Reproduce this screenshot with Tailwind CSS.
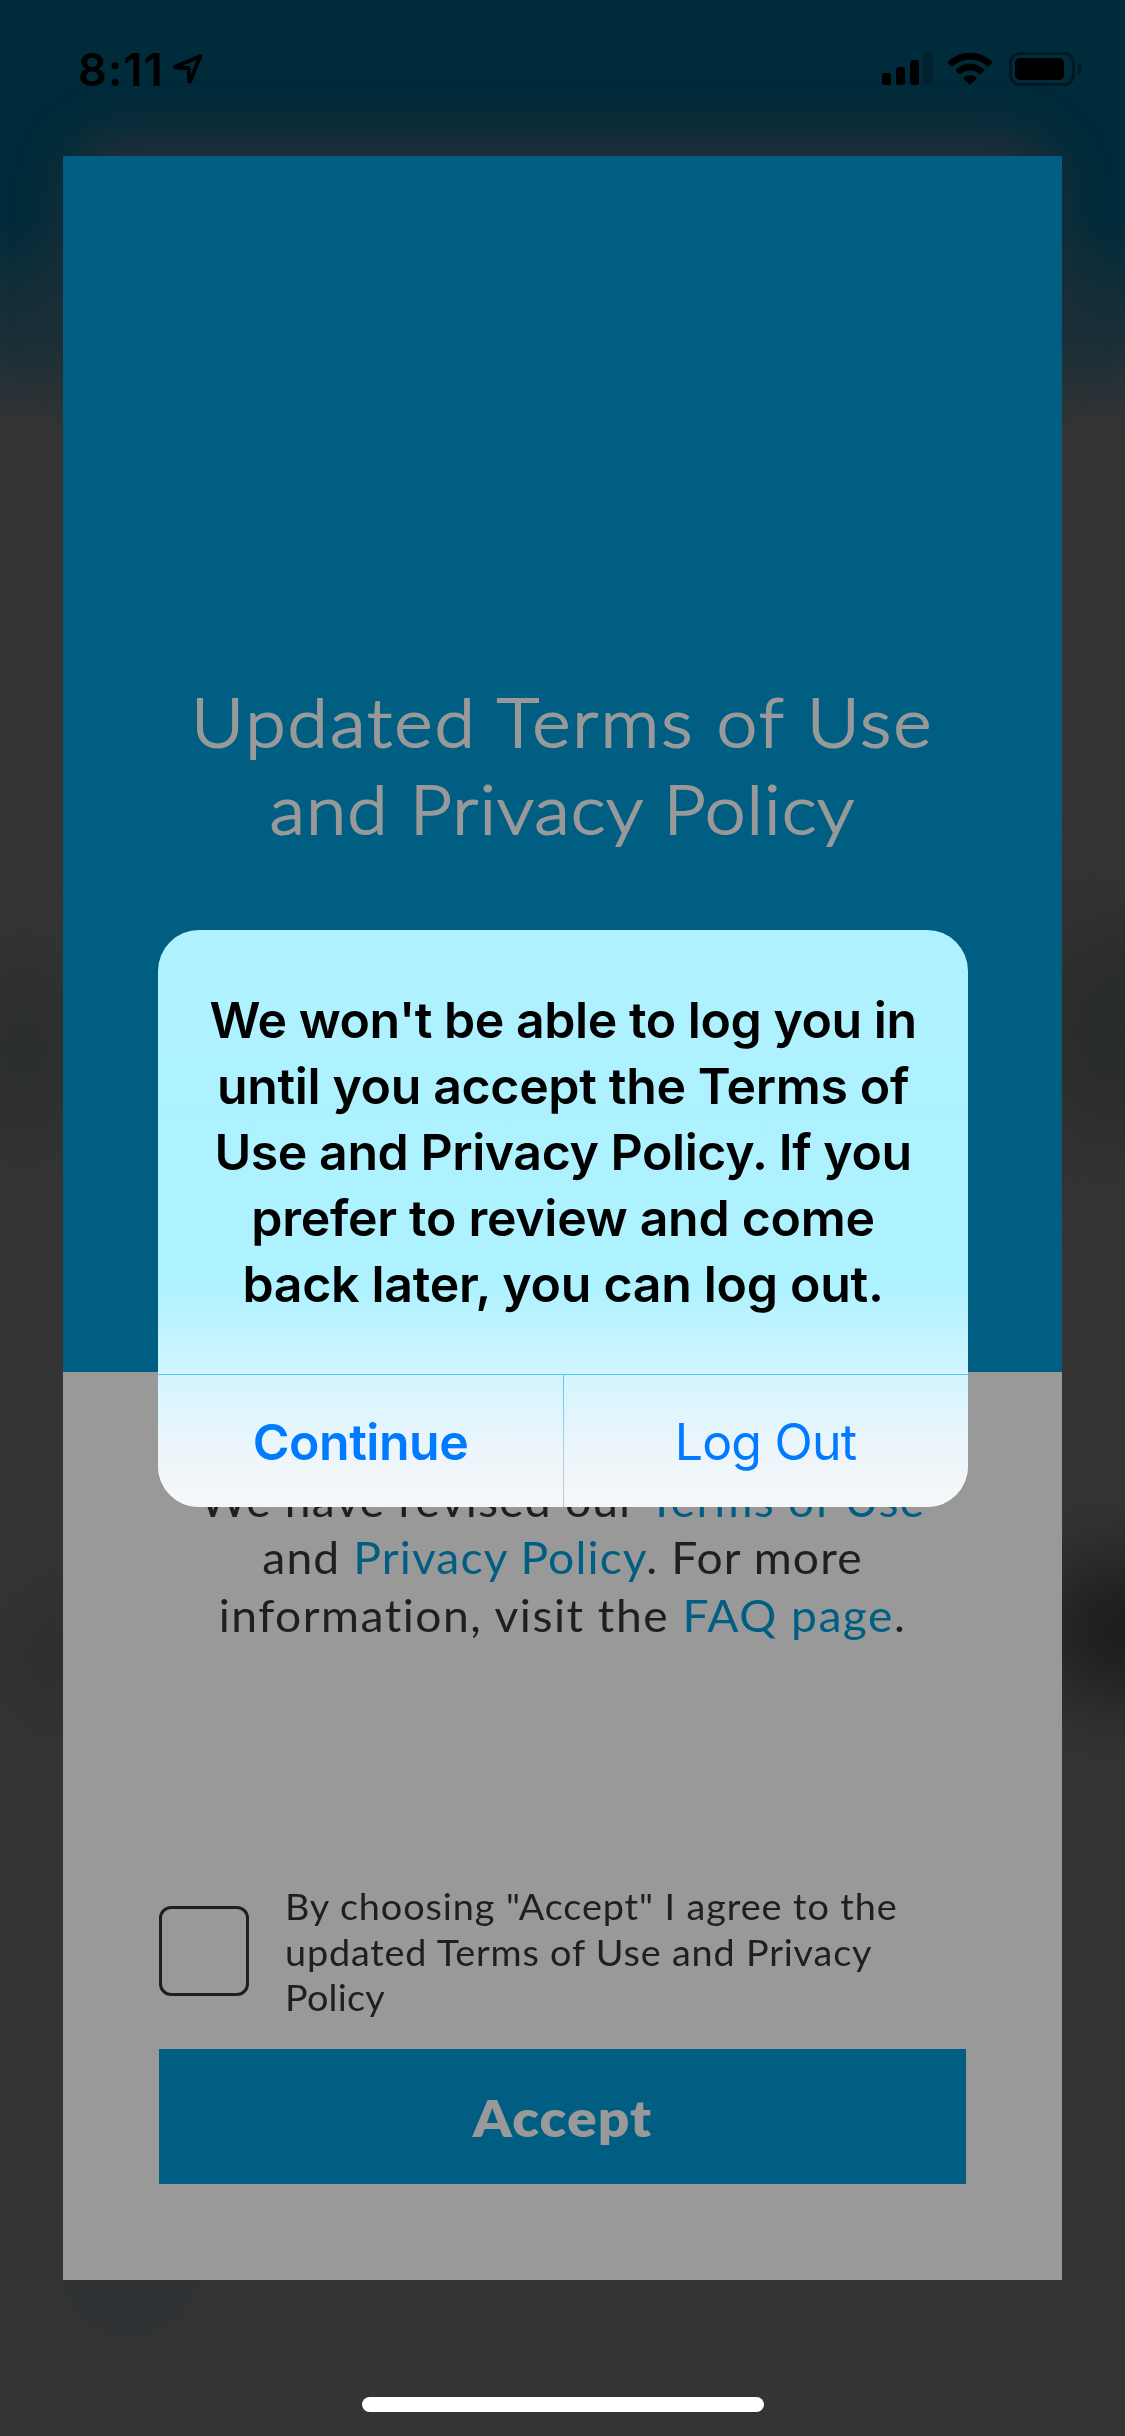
<!DOCTYPE html>
<html lang="en">
<head>
<meta charset="utf-8">
<title>Updated Terms of Use and Privacy Policy</title>
<script src="https://cdn.jsdelivr.net/npm/@tailwindcss/browser@4"></script>
</head>
<body class="relative flex h-[2436px] w-[1125px] flex-col overflow-hidden bg-[#343434] font-[Lato,sans-serif]">
  <!-- Blurred app backdrop -->
  <div class="absolute inset-0 overflow-hidden" aria-hidden="true">
    <div class="absolute inset-x-0 top-0 h-[430px] bg-linear-to-b from-[#002b3a] from-50% via-[#1b2f37] via-80% to-[#343434] to-100%"></div>
    <div class="absolute left-[65px] top-[135px] h-[250px] w-[995px] rounded-[60px] bg-[#232e36] blur-[24px]"></div>
    <div class="absolute -left-[40px] top-[960px] h-[180px] w-[130px] rounded-full bg-[#2a2e2c] blur-[45px]"></div>
    <div class="absolute left-[1040px] top-[920px] h-[220px] w-[160px] rounded-full bg-[#272b27] blur-[50px]"></div>
    <div class="absolute left-[1040px] top-[1560px] h-[140px] w-[180px] rounded-full bg-[#1d1d1e] blur-[38px]"></div>
    <div class="absolute left-[20px] top-[1590px] h-[130px] w-[80px] rounded-full bg-[#302e2c] blur-[35px]"></div>
    <div class="absolute left-[50px] top-[2220px] h-[120px] w-[160px] rounded-full bg-[#2e3235] blur-[35px]"></div>
  </div>

  <!-- Status bar -->
  <header class="relative flex h-[156px] shrink-0 items-start justify-between pl-[78px] pr-[42px] pt-[52px] text-black">
    <div class="flex items-start">
      <span class="-mt-[10px] block w-[95px] whitespace-nowrap font-[Inter,sans-serif] text-[45px] font-semibold leading-[55px] tracking-[1.2px]">8:11</span>
      <svg class="mt-px" width="32" height="32" viewBox="0 0 32 32" fill="none" stroke="#000" stroke-width="3.8" stroke-linejoin="round"><path d="M27.3 3.2 L1.9 13.7 Q1.4 14.2 2.2 14.7 L15.7 15 L16 28 Q16.4 29.2 17.3 28Z"/></svg>
    </div>
    <div class="flex items-start">
      <svg width="42" height="34" viewBox="0 0 42 34"><rect x="0" y="21" width="9" height="12" rx="2.5"/><rect x="14" y="15" width="9" height="18" rx="2.5"/><rect x="28" y="8" width="9" height="25" rx="2.5"/></svg>
      <svg class="-ml-px" width="10" height="34" viewBox="0 0 10 34"><rect x="0.5" y="1" width="9" height="32" rx="2.5" fill="#00212d"/></svg>
      <svg class="ml-[14px] mr-px" width="46" height="34" viewBox="0 0 46 34"><path d="M1 9.6 A31.5 31.5 0 0 1 45 9.6 Q45.6 10.4 45 11.1 L41.8 14.3 Q41 15 40.2 14.3 A25 25 0 0 0 5.8 14.3 Q5 15 4.2 14.3 L1 11.1 Q.4 10.4 1 9.6Z"/><path d="M8.9 17.4 A20.5 20.5 0 0 1 37.1 17.4 Q37.9 18.1 37.1 18.9 L33.8 22 Q33 22.7 32.2 22 A14 14 0 0 0 13.8 22 Q13 22.7 12.2 22 L8.9 18.9 Q8.1 18.1 8.9 17.4Z"/><path d="M16.9 25.3 A9.5 9.5 0 0 1 29.1 25.3 Q30 26 29.1 26.9 L24 32 Q23 33 22 32 L16.9 26.9 Q16 26 16.9 25.3Z"/></svg>
      <svg class="ml-[15px]" width="74" height="34" viewBox="0 0 74 34"><rect x="1.5" y="1.5" width="63" height="31" rx="9.5" fill="none" stroke="#001a24" stroke-width="3"/><rect x="6" y="6" width="49" height="22" rx="5"/><path d="M69 11 Q73 12.6 73 17 T69 23Z" fill="#001a24"/></svg>
    </div>
  </header>

  <!-- Terms card -->
  <main class="relative mx-[63px] flex h-[2124px] w-[999px] shrink-0 flex-col bg-[#999999] text-[#1e1f20]">
    <h1 class="h-[1216px] whitespace-nowrap bg-[#005e83] pt-[522px] text-center text-[67px] font-light leading-[87px] text-[#999999] [-webkit-text-stroke:2.1px_#999999]">
      <span class="block scale-x-[1.08] tracking-[2.3px]">Updated Terms of Use</span>
      <span class="block scale-x-[1.08] tracking-[1.4px]">and Privacy Policy</span>
    </h1>
    <p class="mt-[100px] h-[172px] whitespace-nowrap text-center text-[44px] leading-[57.33px]">
      <span class="block scale-x-[1.05] tracking-[1.15px]">We have revised our <a class="text-[#005e83]">Terms of Use</a></span>
      <span class="block scale-x-[1.05] tracking-[1.08px]">and <a class="text-[#005e83]">Privacy Policy</a>. For more</span>
      <span class="block scale-x-[1.05] tracking-[1.42px]">information, visit the <a class="text-[#005e83]">FAQ page</a>.</span>
    </p>
    <div class="mx-24 mt-[239px] flex items-start gap-[36px]">
      <div class="mt-[23px] size-[90px] shrink-0 rounded-xl border-3 border-[#1e1f20]"></div>
      <p class="whitespace-nowrap pt-px text-[36px] leading-[45.5px]">
        <span class="block origin-left scale-x-[1.05] tracking-[0.86px]">By choosing "Accept" I agree to the</span>
        <span class="block origin-left scale-x-[1.05] tracking-[0.78px]">updated Terms of Use and Privacy</span>
        <span class="block origin-left scale-x-[1.05] tracking-[0.2px]">Policy</span>
      </p>
    </div>
    <button class="mx-24 mt-[28px] h-[135px] bg-[#005e83] text-[51px] font-extrabold text-[#999999]"><span class="block scale-x-[1.08] pt-[5px] tracking-[1px]">Accept</span></button>
  </main>

  <!-- Home indicator -->
  <footer class="relative flex justify-center pt-[117px]"><div class="h-[15px] w-[402px] rounded-full bg-white"></div></footer>

  <!-- Alert dialog -->
  <div role="alertdialog" class="absolute left-[158px] top-[930px] flex h-[577px] w-[810px] flex-col overflow-hidden rounded-[41px] bg-linear-to-b from-[#aff1fe] from-0% via-[#aef2ff] via-62% to-[#d3f5ff] to-77% font-[Inter,sans-serif] text-[50px]">
    <p class="h-[444px] whitespace-nowrap pt-[56.5px] text-center font-semibold leading-[66px] text-black">
      <span class="block tracking-[-0.45px]">We won't be able to log you in</span>
      <span class="block tracking-[-0.35px]">until you accept the Terms of</span>
      <span class="block tracking-[-0.43px]">Use and Privacy Policy. If you</span>
      <span class="block tracking-[-0.28px]">prefer to review and come</span>
      <span class="block tracking-[-0.28px]">back later, you can log out.</span>
    </p>
    <div class="h-px bg-[#4acbfa]"></div>
    <div class="flex h-[132px] bg-linear-to-b from-[#d3f5ff] via-[#eaf5fb] to-[#f7f7f8] text-[#007aff]">
      <button class="w-[405px] pt-[2px] font-semibold tracking-[-0.49px]">Continue</button>
      <div class="w-px bg-linear-to-b from-[#50cbf5] via-[#a3cfdf] to-[#c4c4c6]"></div>
      <button class="w-[404px] pr-px pt-[2px] tracking-[-0.8px]">Log Out</button>
    </div>
  </div>
</body>
</html>
